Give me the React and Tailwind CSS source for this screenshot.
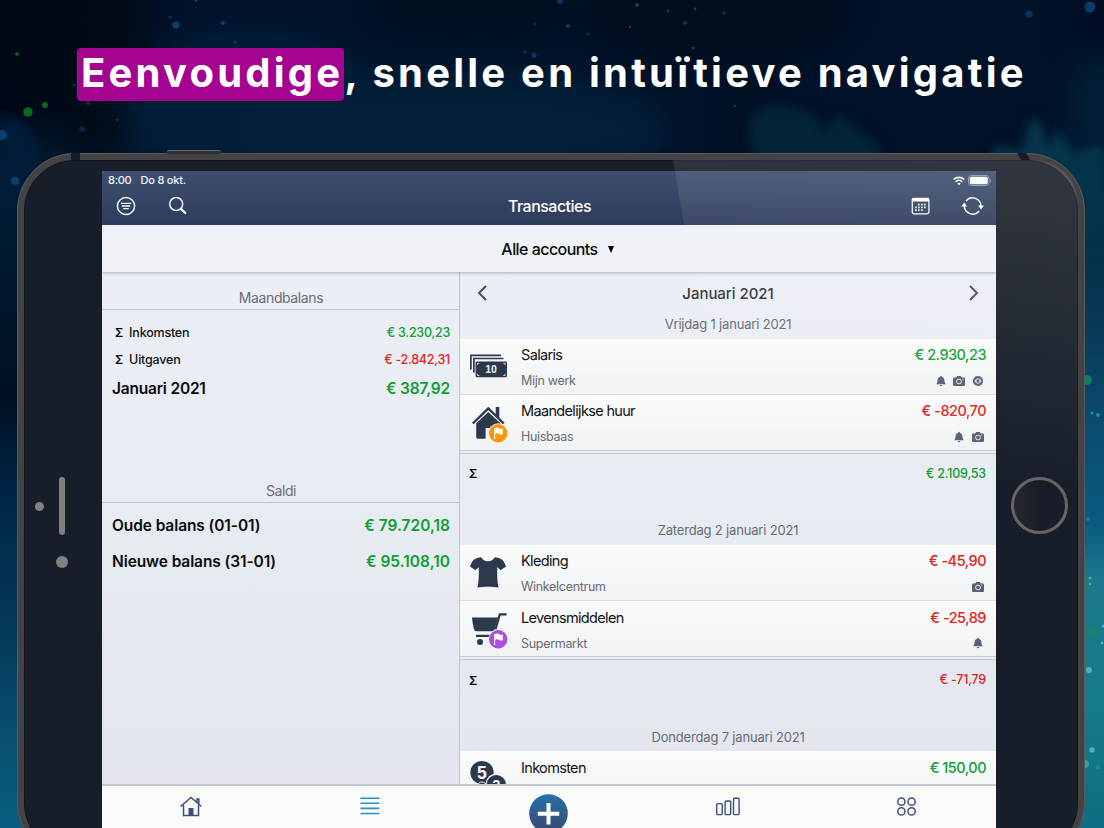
const NAVY = "#2c394d";

const totals = [
  { label: "Inkomsten", amount: "€ 3.230,23", color: "text-[#0f9f33]" },
  { label: "Uitgaven", amount: "€ -2.842,31", color: "text-[#e51f1b]" },
];

const balances = [
  { label: "Oude balans (01-01)", amount: "€ 79.720,18" },
  { label: "Nieuwe balans (31-01)", amount: "€ 95.108,10" },
];

const days = [
  {
    date: "Vrijdag 1 januari 2021",
    sum: "€ 2.109,53",
    positive: true,
    items: [
      { icon: "money", title: "Salaris", note: "Mijn werk", amount: "€ 2.930,23", positive: true, marks: ["bell", "camera", "repeat"] },
      { icon: "house", title: "Maandelijkse huur", note: "Huisbaas", amount: "€ -820,70", flag: "#ff9500", marks: ["bell", "camera"] },
    ],
  },
  {
    date: "Zaterdag 2 januari 2021",
    sum: "€ -71,79",
    items: [
      { icon: "shirt", title: "Kleding", note: "Winkelcentrum", amount: "€ -45,90", marks: ["camera"] },
      { icon: "cart", title: "Levensmiddelen", note: "Supermarkt", amount: "€ -25,89", flag: "#af4ee0", marks: ["bell"] },
    ],
  },
  {
    date: "Donderdag 7 januari 2021",
    items: [
      { icon: "coins", title: "Inkomsten", note: "", amount: "€ 150,00", positive: true, marks: [] },
    ],
  },
];

// [x, y, radius, color]
const specks = [
  [17, 54, 2, "#0a6b1c"],
  [28, 112, 4.8, "#067a1e"],
  [45, 105, 3, "#067a1e"],
  [2, 135, 5, "#0a4a7c"],
  [15, 181, 4, "#0d4a78"],
  [176, 25, 3.6, "#0f4a7a"],
  [170, 17, 1.6, "#0c3a63"],
  [223, 23, 2.2, "#0f4a7a"],
  [235, 42, 1.5, "#0f4a7a"],
  [196, 0, 1.5, "#0f5a86"],
  [82, 129, 3, "#0a2a56"],
  [74, 85, 1.5, "#0b3357"],
  [88, 103, 2, "#0b3c66"],
  [117, 120, 1, "#0f4a7a"],
  [525, 52, 1.4, "#0c3f70"],
  [534, 55, 2.6, "#0c3f70"],
  [535, 24, 1.1, "#0c3a63"],
  [560, 1, 3, "#0d3b66"],
  [568, 26, 2, "#0c3f70"],
  [588, 34, 1.3, "#0d4a78"],
  [637, 5, 2, "#0d4a78"],
  [668, 11, 1.4, "#0d4a78"],
  [630, 27, 1.2, "#0d4a78"],
  [685, 23, 1.8, "#0d4a78"],
  [695, 9, 1.4, "#0d4a78"],
  [724, 13, 1.4, "#0d4a78"],
  [693, 48, 1.5, "#0d4a78"],
  [735, 106, 1.3, "#0d4a78"],
  [1029, 14, 3.5, "#0a3c66"],
  [1090, 7, 5.5, "#0d4570"],
  [1087, 380, 5, "#0f8a5c"],
  [1092, 413, 1.5, "#2f8fa0"],
  [1098, 415, 2, "#2f8fa0"],
  [1088, 519, 2, "#237c9b"],
  [1090, 578, 1.5, "#4fbd93"],
  [1090, 584, 1.2, "#4fbd93"],
  [1094, 633, 6, "#168175"],
  [1103, 626, 1.5, "#5bb8bb"],
  [1102, 643, 1.4, "#5bb8bb"],
  [1089, 670, 3, "#5fb9c4"],
  [1092, 750, 2.7, "#5fb9c4"],
  [1085, 764, 4, "#3ea3ad"],
  [1098, 767, 2.5, "#139179"],
];

const Backdrop = () => (
  <svg className="absolute inset-0" width="1104" height="828" viewBox="0 0 1104 828">
    <defs>
      <linearGradient id="left" x1="0" y1="0" x2="0" y2="1">
        <stop offset="0" stopColor="#000713" />
        <stop offset="0.13" stopColor="#000918" />
        <stop offset="0.2" stopColor="#001d35" />
        <stop offset="0.35" stopColor="#00172b" />
        <stop offset="0.48" stopColor="#001022" />
        <stop offset="0.6" stopColor="#002746" />
        <stop offset="0.75" stopColor="#04375a" />
        <stop offset="0.9" stopColor="#08506f" />
        <stop offset="1" stopColor="#075f80" />
      </linearGradient>
      <linearGradient id="right" x1="0" y1="0" x2="0" y2="1">
        <stop offset="0" stopColor="#000e23" />
        <stop offset="0.12" stopColor="#000f26" />
        <stop offset="0.2" stopColor="#042d42" />
        <stop offset="0.36" stopColor="#073450" />
        <stop offset="0.5" stopColor="#0b4a6d" />
        <stop offset="0.63" stopColor="#0a5a80" />
        <stop offset="0.7" stopColor="#1c788c" />
        <stop offset="0.85" stopColor="#167b8b" />
        <stop offset="1" stopColor="#0e6d82" />
      </linearGradient>
      <filter id="soft" x="-30%" y="-80%" width="160%" height="260%" colorInterpolationFilters="sRGB">
        <feGaussianBlur stdDeviation="16" />
      </filter>
      <filter id="edge" x="-50%" y="-50%" width="200%" height="200%" colorInterpolationFilters="sRGB">
        <feGaussianBlur stdDeviation="5" />
      </filter>
    </defs>
    <rect width="552" height="828" fill="url(#left)" />
    <rect x="552" width="552" height="828" fill="url(#right)" />
    <g filter="url(#soft)">
      <rect x="60" y="-60" width="110" height="210" fill="#000b18" />
      <rect x="150" y="-60" width="930" height="260" fill="#001128" />
      <ellipse cx="250" cy="110" rx="130" ry="80" fill="#011e38" />
      <ellipse cx="450" cy="130" rx="220" ry="60" fill="#011f38" />
      <ellipse cx="480" cy="0" rx="110" ry="30" fill="#000f1e" />
      <ellipse cx="720" cy="10" rx="130" ry="50" fill="#000d1c" />
      <rect x="725" y="90" width="30" height="90" fill="#001122" />
      <rect x="1074" y="60" width="60" height="110" fill="#011f36" />
    </g>
    <g filter="url(#edge)">
      <path d="M752 160 750 116 772 104 812 112 824 132 836 114 858 128 884 152 884 170Z" fill="#032337" />
      <path d="M986 164 996 146 1022 150 1030 118 1042 122 1048 146 1060 128 1072 152 1104 146V240H1060Z" fill="#05344a" />
      <path d="M0 116 26 124 38 150 34 190 0 230Z" fill="#001c38" />
    </g>
    {specks.map(([x, y, r, color]) => (
      <circle key={`${x}-${y}`} cx={x} cy={y} r={r} fill={color} opacity="0.85" />
    ))}
  </svg>
);

const FlagBadge = ({ color }) => (
  <g>
    <circle cx="30.2" cy="30.2" r="10" fill="#f4f5f6" />
    <circle cx="30.2" cy="30.2" r="9.2" fill={color} />
    <path d="M26.6 25v11" stroke="#fff" strokeWidth="1.1" />
    <path d="M26.600 25.300c2.400-1 3.600-.8 4.600 0 1 .7 2.200.8 3.600.3v5.600c-1.400.5-2.600.4-3.600-.3-1-.8-2.200-1-4.600 0Z" fill="#fff" />
  </g>
);

const categoryIcons = {
  money: (
    <>
      <path d="M2.900 22.500V8.300H33M5.900 25.500V11.500H35.500" fill="none" stroke={NAVY} strokeWidth="1.700" />
      <rect x="7.600" y="14.500" width="31.400" height="15.800" rx="1.200" fill={NAVY} />
      <path d="M9.500 18v-1.700h1.800M35.300 16.300h1.800v1.700M37.100 26.800v1.700h-1.800M11.300 28.500H9.500v-1.700" fill="none" stroke="#dfe3ea" strokeWidth="0.900" />
      <text x="23" y="26.400" textAnchor="middle" fontSize="10.500" fontWeight="700" fill="#f5f6f8" className="font-['Liberation_Sans',sans-serif]">
        10
      </text>
    </>
  ),
  house: (
    <>
      <path d="m4.800 20.500 15.500-15 15.500 15" fill="none" stroke={NAVY} strokeWidth="2.400" />
      <path d="M27.700 4.100h3.600v11l-3.600-3.500Z" fill={NAVY} />
      <path d="M8.200 20.300 20.300 9l12.200 11.300V35.500H23.600V25h-6V35.700H9.600q-1.400 0-1.400-1.400Z" fill={NAVY} />
    </>
  ),
  shirt: (
    <path
      d="M13.300 4.200c2.200 5.500 11.200 5.500 13.400 0 2.800.3 5.300.9 7.200 2.400 1.700 1.500 3 4.200 4.200 7l-5.600 3.700-3.200-3.400c-.4 7-.1 14.500 1.200 20.600-5.800-.9-15.200-.9-21 0 1.300-6.100 1.600-13.600 1.200-20.600l-3.200 3.400-5.600-3.700c1.200-2.800 2.500-5.500 4.200-7 1.900-1.500 4.400-2.100 7.200-2.400Z"
      fill={NAVY}
    />
  ),
  cart: (
    <>
      <path d="M4 8.500h26l-3.300 11.800q-.7 2-2.700 2H8.500q-2 0-2.500-2Q4.300 14 4 8.500Z" fill={NAVY} />
      <path d="M38.600 5.400h-6.800L27.500 20.500M8 26.800h20" fill="none" stroke={NAVY} strokeWidth="2.200" />
      <circle cx="12" cy="33" r="3" fill={NAVY} />
    </>
  ),
  coins: (
    <>
      <circle cx="14" cy="13.500" r="11.600" fill={NAVY} />
      <text x="13.800" y="19.500" textAnchor="middle" fontSize="17.500" fontWeight="700" fill="#f5f6f8" className="font-['Liberation_Sans',sans-serif]">
        5
      </text>
      <circle cx="14" cy="27.500" r="4.500" fill={NAVY} stroke="#f5f6f8" />
      <circle cx="28.300" cy="25.500" r="10.800" fill="#f5f6f8" />
      <circle cx="28.300" cy="25.500" r="9.600" fill={NAVY} />
      <text x="28.300" y="31" textAnchor="middle" fontSize="14.500" fontWeight="700" fill="#f5f6f8" className="font-['Liberation_Sans',sans-serif]">
        2
      </text>
    </>
  ),
};

const marks = {
  bell: <path d="M6 .8q.8 0 .8 1C9 2.400 9.400 4.200 9.500 6c.1 1.600.6 2.300 1.300 3.200H1.200C1.900 8.300 2.400 7.600 2.500 6c.1-1.800.5-3.600 2.700-4.200q0-1 .8-1ZM4.700 10h2.600q-.3 1.200-1.300 1.200T4.700 10Z" fill="#566173" />,
  camera: (
    <>
      <path d="M1.200 2.500h2l.9-1.400h3.800l.9 1.400h2q1.200 0 1.200 1.200v6q0 1.200-1.200 1.200H1.200Q0 10.900 0 9.700v-6q0-1.200 1.200-1.200Z" fill="#566173" />
      <circle cx="6" cy="6.500" r="2.400" fill="none" stroke="#eceef1" strokeWidth="1" />
      <path d="M9 4.100h1.400" stroke="#eceef1" strokeWidth="0.800" />
    </>
  ),
  repeat: (
    <>
      <circle cx="6" cy="6" r="5.100" fill="#566173" />
      <circle cx="6" cy="6" r="2.300" fill="none" stroke="#eef0f3" strokeWidth="0.900" />
      <path d="M2.200 5.600h3L3.700 7.600ZM9.800 6.400h-3L8.300 4.400Z" fill="#eef0f3" />
    </>
  ),
};

const SectionTitle = ({ children }) => (
  <div className="flex items-end justify-center border-b border-[#c2c7ce] pb-[1px] pl-px text-[14px] leading-[21px] tracking-[-0.4px] text-[#6a6d73]">
    {children}
  </div>
);

const Transaction = ({ item }) => (
  <div className="flex h-[56.200px] border-b border-[#dcdee0] bg-gradient-to-b from-[#fafbfb] to-[#f1f2f4] pr-[10px] pl-2 last:border-[#c9cbce]">
    <svg className="mt-2 shrink-0" width="40" height="44" viewBox="0 0 40 44">
      {categoryIcons[item.icon]}
      {item.flag && <FlagBadge color={item.flag} />}
    </svg>
    <div className="ml-[13px] flex-1 pt-[6.500px]">
      <p className="text-[14.500px] leading-5 tracking-[-0.66px] text-[#111]">{item.title}</p>
      <p className="mt-2 text-[12.500px] leading-4 tracking-[-0.3px] text-[#696b70]">{item.note}</p>
    </div>
    <div className="pt-[6.500px] text-right">
      <p className={`text-[14.500px] leading-5 font-medium tracking-[-0.5px] ${item.positive ? "text-[#0f9f33]" : "text-[#e51f1b]"}`}>
        {item.amount}
      </p>
      <div className="mt-[9.500px] mr-[2px] flex justify-end gap-[6.700px]">
        {item.marks.map((mark) => (
          <svg key={mark} width="12" height="12" viewBox="0 0 12 12">
            {marks[mark]}
          </svg>
        ))}
      </div>
    </div>
  </div>
);

const StatusBar = () => (
  <div className="flex h-[19px] items-center justify-between pr-[5px] pl-[6px] text-[11px] font-medium text-[#f1f3f7]">
    <div className="flex gap-[9px]">
      <span className="tracking-[-0.25px]">8:00</span>
      <span className="tracking-[-0.2px]">Do 8 okt.</span>
    </div>
    <div className="flex items-center gap-[3px]">
      <svg width="12" height="10" viewBox="0 0 12 10" fill="none" stroke="#fff" strokeWidth="1.600">
        <path d="M.7 3.500a7.600 7.600 0 0 1 10.600 0M2.700 5.700a4.700 4.700 0 0 1 6.600 0" />
        <path d="M6 9.300 4.300 7.500a2.500 2.500 0 0 1 3.400 0Z" fill="#fff" stroke="none" />
      </svg>
      <svg width="23" height="11" viewBox="0 0 23 11">
        <rect x="0.500" y="0.500" width="20.500" height="10" rx="2.800" fill="none" stroke="#8f99ae" />
        <rect x="1.800" y="1.800" width="17.900" height="7.400" rx="1.500" fill="#fff" />
        <path d="M22 3.800v3.400q.9-.6.9-1.700T22 3.800Z" fill="#8f99ae" />
      </svg>
    </div>
  </div>
);

const NavBar = () => (
  <div className="grid h-[32px] grid-cols-3 items-center pr-[11px] pl-[14px]">
    <div className="flex items-center gap-[32px]">
      <svg width="20" height="20" viewBox="0 0 20 20" fill="none" stroke="#f3f5f9" strokeWidth="1.500">
        <circle cx="10" cy="10" r="8.600" />
        <path d="M4.800 7.400h10.400M5.800 10h8.400M7.200 12.600h5.600" strokeWidth="1.300" />
      </svg>
      <svg width="20" height="20" viewBox="0 0 20 20" fill="none" stroke="#f3f5f9" strokeWidth="1.500">
        <circle cx="8.200" cy="8" r="6.500" />
        <path d="m12.800 12.600 5.200 5.200" strokeWidth="2.200" />
      </svg>
    </div>
    <p className="pr-[2px] text-center text-[16px] leading-5 font-medium tracking-[-0.53px] text-white">Transacties</p>
    <div className="flex items-center justify-end gap-[30px]">
      <svg width="20" height="20" viewBox="0 0 20 20">
        <rect x="1.300" y="2.300" width="16.600" height="15.600" rx="1.800" fill="none" stroke="#f6f7fa" strokeWidth="1.300" />
        <path d="M1.300 2.300h16.600v3.200H1.300Z" fill="#fff" />
        <path d="M7 8.600h9M4 11.400h12M4 14.200h9" stroke="#e5e8ee" strokeWidth="1.700" strokeDasharray="1.700 1.300" />
      </svg>
      <svg width="24" height="20" viewBox="0 0 24 20" fill="none" stroke="#f6f7fa" strokeWidth="1.500">
        <path d="M5 5A8.500 8.500 0 0 1 20 10M18.200 15A8.500 8.500 0 0 1 3.200 10" />
        <path d="M.3 10.500 3.200 6.400 6.100 10.500ZM17.100 9.500h5.800L20 13.600Z" fill="#fff" stroke="none" />
      </svg>
    </div>
  </div>
);

const Summary = () => (
  <section className="w-[358px] shrink-0 border-r border-[#bfc4cc] pt-[15.500px]">
    <SectionTitle>Maandbalans</SectionTitle>
    <div className="h-[170px] pt-[9.500px] pr-[9px] pl-[10px]">
      {totals.map((row) => (
        <div key={row.label} className="flex h-[27px] items-center justify-between text-[12.500px] font-medium">
          <span className="pl-[3px] tracking-[-0.2px] text-[#111]">
            <span className="mr-[6px] text-[12px] font-semibold">Σ</span>
            {row.label}
          </span>
          <span className={`tracking-[-0.25px] ${row.color}`}>{row.amount}</span>
        </div>
      ))}
      <div className="flex h-[31px] items-center justify-between text-[15.500px] font-semibold tracking-[-0.2px]">
        <span>Januari 2021</span>
        <span className="text-[#0f9f33]">€ 387,92</span>
      </div>
    </div>
    <SectionTitle>Saldi</SectionTitle>
    <div className="pt-[4.500px] pr-[9px] pl-[10px]">
      {balances.map((row) => (
        <div key={row.label} className="flex h-9 items-center justify-between text-[15.500px] font-semibold">
          <span className="tracking-[-0.1px]">{row.label}</span>
          <span className="text-[#0f9f33]">{row.amount}</span>
        </div>
      ))}
    </div>
  </section>
);

const Feed = () => (
  <section className="min-w-0 flex-1">
    <div className="flex h-[43px] items-center justify-between px-[16px]">
      <svg width="14" height="18" viewBox="0 0 14 18" fill="none" stroke="#4c4f55" strokeWidth="2">
        <path d="M10 2 3 9l7 7" />
      </svg>
      <p className="pt-[2px] text-[15px] font-medium tracking-[-0.05px] text-[#333539]">Januari 2021</p>
      <svg width="14" height="18" viewBox="0 0 14 18" fill="none" stroke="#4c4f55" strokeWidth="2">
        <path d="m4 2 7 7-7 7" />
      </svg>
    </div>
    {days.map((day) => (
      <div key={day.date}>
        <p className="flex h-[24px] items-center justify-center pb-[4px] text-[13px] tracking-[-0.18px] text-[#696b70]">{day.date}</p>
        <div>
          {day.items.map((item) => (
            <Transaction key={item.title} item={item} />
          ))}
        </div>
        {day.sum && (
          <div className="h-[70px]">
            <div className="h-[3px] border-b border-[#c3c7cd] bg-[#eceef1]" />
            <div className="flex h-[41px] items-center justify-between pr-[10px] pl-[9px] text-[12.500px] font-medium tracking-[-0.2px]">
              <span className="text-[12px] font-semibold">Σ</span>
              <span className={day.positive ? "text-[#0f9f33]" : "text-[#e51f1b]"}>{day.sum}</span>
            </div>
          </div>
        )}
      </div>
    ))}
  </section>
);

const TabBar = () => (
  <nav className="grid h-[60px] shrink-0 grid-cols-5 justify-items-center border-t-2 border-[#c3ccd8] bg-[#fafafa] pt-[10px]">
    <svg className="-mt-px" width="24" height="24" viewBox="0 0 24 24" fill="none" stroke="#3d4f77" strokeWidth="1.500">
      <path d="m1.500 11.500 10.500-9 10.500 9M4.500 10v10.500h15V10M18 7V4h1.800v5" />
      <path d="M9.500 13h5v7.500h-5Z" fill="#3d4f77" stroke="none" />
    </svg>
    <svg width="20" height="22" viewBox="0 0 20 22" stroke="#2596bd" strokeWidth="1.600">
      <path d="M.5 2.200h19M.5 7.300h19M.5 12.400h19M.5 17.500h19" />
    </svg>
    <svg className="-mt-[2px]" width="39" height="39" viewBox="0 0 39 39">
      <defs>
        <linearGradient id="add" x1="0" y1="0" x2="0" y2="1">
          <stop offset="0" stopColor="#2474a9" />
          <stop offset="1" stopColor="#3a4470" />
        </linearGradient>
      </defs>
      <circle cx="19.500" cy="19.500" r="19.300" fill="url(#add)" />
      <path d="M19.500 9v21.500M8.800 19.700h21.400" stroke="#fff" strokeWidth="4" />
    </svg>
    <svg width="26" height="22" viewBox="0 0 26 22" fill="none" stroke="#3d4f77" strokeWidth="1.400">
      <rect x="1.700" y="7.600" width="5.600" height="11" rx="1.200" />
      <rect x="10.100" y="5" width="5.600" height="13.600" rx="1.200" />
      <rect x="18.500" y="2.300" width="5.600" height="16.300" rx="1.200" />
    </svg>
    <svg width="20" height="22" viewBox="0 0 20 22" fill="none" stroke="#3d4f77" strokeWidth="1.500">
      <circle cx="4.400" cy="5.700" r="3.600" />
      <circle cx="14.600" cy="5.700" r="3.600" />
      <circle cx="4.400" cy="15.400" r="3.600" />
      <circle cx="14.600" cy="15.400" r="3.600" />
    </svg>
  </nav>
);

const Screen = () => (
  <main className="flex h-[674px] w-[894px] shrink-0 flex-col overflow-hidden rounded-t-[2px] bg-gradient-to-b from-[#edf1f7] to-[#e2e5ed]">
    <header className="h-[54px] shrink-0 bg-gradient-to-b from-[#3e506f] to-[#2e3b5b]">
      <StatusBar />
      <NavBar />
    </header>
    <div className="z-10 flex h-[46.500px] shrink-0 items-center justify-center gap-[10px] bg-[#eff3f7] pt-[1px] pl-[17px] shadow-[0_1px_3px_rgba(90,95,105,0.45)]">
      <span className="text-[16px] font-medium tracking-[-0.55px]">Alle accounts</span>
      <span className="mt-px border-x-[3.500px] border-t-[7px] border-x-transparent border-t-black" />
    </div>
    <div className="flex h-[512.500px] shrink-0 overflow-hidden">
      <Summary />
      <Feed />
    </div>
    <TabBar />
  </main>
);

const Tablet = () => (
  <div className="relative ml-[17px] h-[708px] w-[1068px]">
    {/* Power button and antenna breaks */}
    <div className="absolute -top-[3px] left-[150px] h-[4px] w-[54px] rounded-t-[2px] border-t border-[#68655f] bg-[#2d3037]" />
    <div className="flex h-full rounded-[58px] border-[7px] border-[#434245] bg-[#181e29] shadow-[inset_0_0_0_1px_#10141d] outline outline-1 -outline-offset-1 outline-[#5c5a57]">
      <div className="flex w-[78px] shrink-0 items-center gap-[15px] pb-[2px] pl-[10.500px]">
        <div className="h-[9px] w-[9px] shrink-0 rounded-full bg-[#7f8180]" />
        <div className="mt-[33px] flex w-[6px] flex-col items-center gap-[21px]">
          <div className="h-[58px] w-[6px] rounded-full bg-[#7f8180]" />
          <div className="h-[12px] w-[12px] rounded-full bg-[#7f8180]" />
        </div>
      </div>
      <div className="pt-[11px]">
        <Screen />
      </div>
      <div className="flex flex-1 items-center justify-center pb-[3px] pl-[4px]">
        <div className="h-[57px] w-[57px] rounded-full border-[3px] border-[#6b6562] bg-gradient-to-r from-[#24272e] via-[#181d28] to-[#181e29]" />
      </div>
    </div>
    <svg className="pointer-events-none absolute inset-0" width="1068" height="708" viewBox="0 0 1068 708">
      <defs>
        <linearGradient id="sheen" x1="0.700" y1="0" x2="0.500" y2="1">
          <stop offset="0" stopColor="#fff" stopOpacity="0.105" />
          <stop offset="1" stopColor="#fff" stopOpacity="0" />
        </linearGradient>
      </defs>
      <path d="M54 0h9v7h-9ZM1000 0h9l4 7h-9Z" fill="#171d2b" />
      <path d="M656 7h354q51 0 51 51v270H710Z" fill="url(#sheen)" />
    </svg>
  </div>
);

export default function App() {
  return (
    <div className="relative h-[828px] w-[1104px] overflow-hidden bg-[#000d1f] font-['Inter','Liberation_Sans',sans-serif] text-[#0b0b0c]">
      <Backdrop />
      <div className="relative">
        <h1 className="flex h-[153px] items-start pt-[48px] pl-[77px] text-[40px] leading-[49px] font-bold tracking-[3.220px] whitespace-pre text-white">
          <span className="rounded-[4px] bg-[#a4048f] pr-px pb-[4px] pl-[4px]">Eenvoudige</span>, snelle en intuïtieve navigatie
        </h1>
        <Tablet />
      </div>
    </div>
  );
}
